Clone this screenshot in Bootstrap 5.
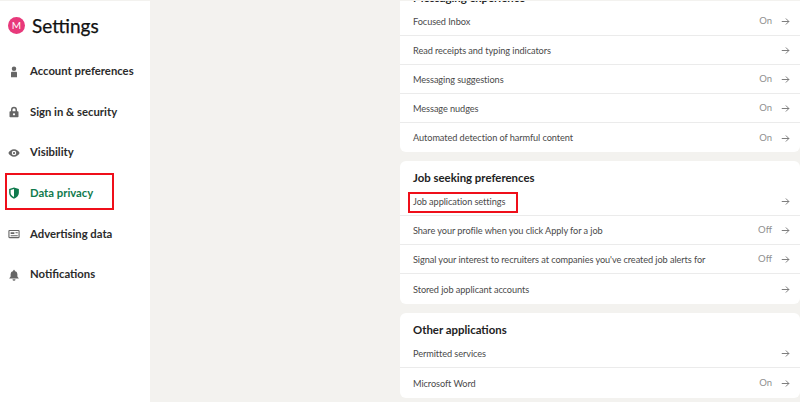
<!doctype html>
<html lang="en"><head><meta charset="utf-8"><title>Settings</title>
<link href="https://cdn.jsdelivr.net/npm/bootstrap@5.3.0/dist/css/bootstrap.min.css" rel="stylesheet">
<style>
html,body{height:100%;overflow:hidden}
body{background:#f3f2ef;font-family:Lato,"Noto Sans",sans-serif;color:#2a2a2a}
.side{width:150px;background:#fff;height:402px;padding-top:13px}
.brandline{height:25px;padding-left:8px;gap:7px}
.avatar{width:17px;height:17px;border-radius:50%;background:#e8397b;color:#fff;font-size:10px;line-height:17px;text-align:center}
.brandname{font-size:19px;font-weight:400;color:#111;line-height:25px;-webkit-text-stroke:.25px #111}
.sidelist{margin-top:13.4px}
.sideitem{height:40.6px;padding-left:8px;gap:10px;font-size:11.3px;font-weight:700;color:#2b2b2b;position:relative}
.sideitem svg{width:12px;height:12px;fill:#666;flex:none}
.sideitem.active{color:#0f7a4d}
.sideitem.active svg{fill:#0f7a4d}
.redbox{position:absolute;border:2px solid #ef0f1a;pointer-events:none}
.rb1{left:5px;top:-.5px;width:109px;height:37px}
.rb2{left:8px;top:5px;width:110px;height:21px}
.mainpane{padding-left:250px;margin-top:-19px}
.setcard{background:#fff;border-radius:6px;margin-bottom:9px;overflow:hidden}
.sethead{height:26px;padding:8px 13px 0;font-size:11.4px;font-weight:700;color:#222;line-height:18px}
.setrow{height:29px;padding:1px 10px 0 13px;font-size:9.2px;letter-spacing:-.08px;color:#4a4a4a;border-bottom:1px solid #ebebeb;position:relative}
.setrow:last-child{border-bottom:0}
.setcard:not(:first-child) .setrow:last-child{height:30px}
.setval{color:#8f8f8f;font-size:9.5px;letter-spacing:0;margin-right:9px}
.setrow svg{width:9px;height:9px;stroke:#707070;fill:none;stroke-width:1.200;flex:none}
.topedge{position:absolute;left:0;right:0;top:0;height:1px;background:#f3f2ef}
</style></head><body>
<div class="d-flex align-items-start">
<aside class="side flex-shrink-0">
 <div class="d-flex align-items-center brandline"><span class="avatar">M</span><span class="brandname">Settings</span></div>
 <div class="sidelist">
  <div class="d-flex align-items-center sideitem"><svg viewBox="0 0 16 16"><circle cx="8" cy="3.500" r="3"/><path d="M4 9c0-.8.7-1.500 1.500-1.500h5c.8 0 1.500.7 1.500 1.500v6H4z"/></svg>Account preferences</div>
  <div class="d-flex align-items-center sideitem"><svg viewBox="0 0 16 16"><path d="M8 1a4 4 0 0 0-4 4v2H3a1 1 0 0 0-1 1v6a1 1 0 0 0 1 1h10a1 1 0 0 0 1-1V8a1 1 0 0 0-1-1h-1V5a4 4 0 0 0-4-4zM6 5a2 2 0 0 1 4 0v2H6zm2 4.500a1.500 1.500 0 1 1 0 3 1.500 1.500 0 0 1 0-3z" fill-rule="evenodd"/></svg>Sign in &amp; security</div>
  <div class="d-flex align-items-center sideitem"><svg viewBox="0 0 16 16"><path d="M8 3C4.500 3 1.800 5.400.5 8c1.300 2.600 4 5 7.500 5s6.200-2.400 7.500-5C14.200 5.400 11.500 3 8 3zm0 8a3 3 0 1 1 0-6 3 3 0 0 1 0 6z" fill-rule="evenodd"/><circle cx="8" cy="8" r="1.500"/></svg>Visibility</div>
  <div class="d-flex align-items-center sideitem active"><svg viewBox="0 0 16 16"><path d="M8 0.500 1.500 2.500V8c0 3.500 3 6.200 6.500 7.500 3.500-1.300 6.500-4 6.500-7.500V2.500zm0 2v10.800C5.500 12.200 3.500 10.300 3.500 8V4z" fill-rule="evenodd"/></svg>Data privacy<span class="redbox rb1"></span></div>
  <div class="d-flex align-items-center sideitem"><svg viewBox="0 0 16 16"><path d="M2 2.500h12a1.500 1.500 0 0 1 1.500 1.500v8a1.500 1.500 0 0 1-1.500 1.500H2A1.500 1.500 0 0 1 .5 12V4A1.500 1.500 0 0 1 2 2.500zM2 4v8h12V4zm1.500 1.500h5V8h-5zm6.500 0h3V7h-3zM3.500 9.500H13V11H3.500z" fill-rule="evenodd"/></svg>Advertising data</div>
  <div class="d-flex align-items-center sideitem"><svg viewBox="0 0 16 16"><path d="M8 1a1 1 0 0 1 1 1v.6A4 4 0 0 1 12.500 6.500V10l2 2.500H1.500L3.500 10V6.500A4 4 0 0 1 7 2.600V2a1 1 0 0 1 1-1zM6 13.500h4a2 2 0 0 1-4 0z"/></svg>Notifications</div>
 </div>
</aside>
<main class="flex-grow-1 mainpane">
 <section class="setcard">
  <div class="sethead">Messaging experience</div>
  <div class="d-flex align-items-center setrow"><span class="flex-grow-1">Focused Inbox</span><span class="setval">On</span><svg viewBox="0 0 12 12"><path d="M1 6h9.500M6.500 2l4 4-4 4"/></svg></div>
  <div class="d-flex align-items-center setrow"><span class="flex-grow-1">Read receipts and typing indicators</span><svg viewBox="0 0 12 12"><path d="M1 6h9.500M6.500 2l4 4-4 4"/></svg></div>
  <div class="d-flex align-items-center setrow"><span class="flex-grow-1">Messaging suggestions</span><span class="setval">On</span><svg viewBox="0 0 12 12"><path d="M1 6h9.500M6.500 2l4 4-4 4"/></svg></div>
  <div class="d-flex align-items-center setrow"><span class="flex-grow-1">Message nudges</span><span class="setval">On</span><svg viewBox="0 0 12 12"><path d="M1 6h9.500M6.500 2l4 4-4 4"/></svg></div>
  <div class="d-flex align-items-center setrow"><span class="flex-grow-1">Automated detection of harmful content</span><span class="setval">On</span><svg viewBox="0 0 12 12"><path d="M1 6h9.500M6.500 2l4 4-4 4"/></svg></div>
 </section>
 <section class="setcard">
  <div class="sethead">Job seeking preferences</div>
  <div class="d-flex align-items-center setrow"><span class="flex-grow-1">Job application settings</span><svg viewBox="0 0 12 12"><path d="M1 6h9.500M6.500 2l4 4-4 4"/></svg><span class="redbox rb2"></span></div>
  <div class="d-flex align-items-center setrow"><span class="flex-grow-1">Share your profile when you click Apply for a job</span><span class="setval">Off</span><svg viewBox="0 0 12 12"><path d="M1 6h9.500M6.500 2l4 4-4 4"/></svg></div>
  <div class="d-flex align-items-center setrow"><span class="flex-grow-1">Signal your interest to recruiters at companies you've created job alerts for</span><span class="setval">Off</span><svg viewBox="0 0 12 12"><path d="M1 6h9.500M6.500 2l4 4-4 4"/></svg></div>
  <div class="d-flex align-items-center setrow"><span class="flex-grow-1">Stored job applicant accounts</span><svg viewBox="0 0 12 12"><path d="M1 6h9.500M6.500 2l4 4-4 4"/></svg></div>
 </section>
 <section class="setcard">
  <div class="sethead">Other applications</div>
  <div class="d-flex align-items-center setrow"><span class="flex-grow-1">Permitted services</span><svg viewBox="0 0 12 12"><path d="M1 6h9.500M6.500 2l4 4-4 4"/></svg></div>
  <div class="d-flex align-items-center setrow"><span class="flex-grow-1">Microsoft Word</span><span class="setval">On</span><svg viewBox="0 0 12 12"><path d="M1 6h9.500M6.500 2l4 4-4 4"/></svg></div>
 </section>
</main>
</div>
<div class="topedge"></div>
<script src="https://cdn.jsdelivr.net/npm/bootstrap@5.3.0/dist/js/bootstrap.bundle.min.js"></script>
</body></html>
